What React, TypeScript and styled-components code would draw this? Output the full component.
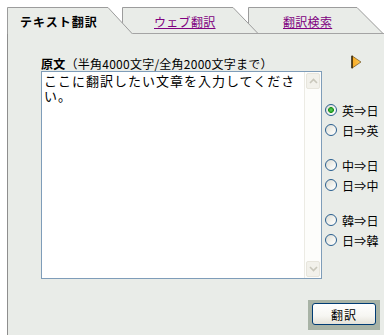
import React from "react";
import styled, { createGlobalStyle } from "styled-components";

const GlobalStyle = createGlobalStyle`
  html, body { margin: 0; padding: 0; background: #ffffff; }
  body { font-family: "Noto Sans CJK JP", "Noto Sans", sans-serif; }
`;

const FONT = `"Noto Sans CJK JP", "Noto Sans", sans-serif`;
const BG = "#E9ECE8";

const Page = styled.div`
  width: 384px;
  height: 335px;
  box-sizing: border-box;
  padding: 7px 0 0 7px;
  display: flex;
  flex-direction: column;
  overflow: hidden;
  font-family: ${FONT};
`;

const TabRow = styled.div`
  display: flex;
  height: 27px;
  flex: none;
`;

const TabBox = styled.div<{ $w: number; $z: number; $pl: number; $first?: boolean }>`
  position: relative;
  width: ${(p) => p.$w}px;
  height: 27px;
  margin-left: ${(p) => (p.$first ? 0 : -11)}px;
  z-index: ${(p) => p.$z};
  display: flex;
  align-items: center;
  padding-left: ${(p) => p.$pl}px;
  box-sizing: border-box;
  flex: none;
`;

const TabShape = styled.svg`
  position: absolute;
  left: 0;
  top: 0;
`;

const ActiveLabel = styled.span`
  position: relative;
  font-size: 12px;
  font-weight: bold;
  letter-spacing: 1px;
  color: #000;
  margin-top: 1px;
`;

const TabLink = styled.a`
  position: relative;
  font-size: 12px;
  letter-spacing: 0.3px;
  color: #800080;
  text-decoration: underline;
  margin-top: 1px;
  cursor: pointer;
`;

const Panel = styled.div`
  flex: 1;
  background: ${BG};
  border-left: 1px solid #8e8e8e;
  padding: 22px 4px 0 33px;
  box-sizing: border-box;
  display: flex;
  flex-direction: column;
`;

const Main = styled.div`
  display: flex;
`;

const LeftCol = styled.div`
  width: 281px;
  display: flex;
  flex-direction: column;
  flex: none;
`;

const Label = styled.div`
  font-size: 12px;
  line-height: 15px;
  height: 15px;
  letter-spacing: 0.25px;
  color: #000;
  white-space: nowrap;
  b { font-weight: bold; }
`;

const TextBox = styled.div`
  display: flex;
  height: 208px;
  border: 1px solid #7f9db9;
  background: #ffffff;
  box-sizing: border-box;
`;

const TextArea = styled.textarea`
  flex: 1;
  border: none;
  outline: none;
  resize: none;
  margin: 0;
  padding: 1px 0 0 2px;
  font-family: ${FONT};
  font-size: 13px;
  letter-spacing: 1px;
  line-height: 15px;
  color: #000;
  background: transparent;
  overflow: hidden;
`;

const ScrollBar = styled.div`
  width: 17px;
  border-left: 1px solid #ecebe4;
  padding: 1px;
  box-sizing: border-box;
  display: flex;
  flex-direction: column;
  justify-content: space-between;
  background: #fdfdfb;
`;

const ScrollBtn = styled.div`
  height: 16px;
  background: #f2f1eb;
  border: 1px solid #e7e5dc;
  border-radius: 2px;
  display: flex;
  align-items: center;
  justify-content: center;
  box-sizing: border-box;
`;

const RightCol = styled.div`
  padding-left: 3px;
  display: flex;
  flex-direction: column;
`;

const Arrow = styled.svg`
  margin: -1px 0 0 26px;
`;

const Groups = styled.div`
  margin-top: 31px;
  display: flex;
  flex-direction: column;
  gap: 15px;
`;

const Group = styled.div`
  display: flex;
  flex-direction: column;
`;

const RadioRow = styled.label`
  display: flex;
  align-items: center;
  height: 20px;
  gap: 5px;
  font-size: 12px;
  letter-spacing: 0.3px;
  color: #000;
  white-space: nowrap;
`;

const Radio = styled.input`
  appearance: none;
  -webkit-appearance: none;
  width: 12px;
  height: 12px;
  margin: 0;
  border-radius: 50%;
  border: 1px solid #2a5f8f;
  box-sizing: border-box;
  background: linear-gradient(135deg, #dcdcd4 0%, #f4f4f0 60%, #ffffff 100%);
  &:checked {
    background: radial-gradient(circle at 50% 50%, #5fd35f 0, #2aa52a 2px, #1f8f1f 2.6px, transparent 3.2px),
      linear-gradient(135deg, #dcdcd4 0%, #f4f4f0 60%, #ffffff 100%);
  }
`;

const Footer = styled.div`
  display: flex;
  justify-content: flex-end;
  margin-top: 21px;
`;

const ButtonFrame = styled.div`
  background: #a8b3a6;
  padding: 3px 4px 5px 4px;
`;

const Button = styled.button`
  width: 64px;
  height: 22px;
  margin: 0;
  padding: 0;
  border: 1px solid #003c74;
  border-radius: 3px;
  background: linear-gradient(#ffffff 0%, #f6f6f2 60%, #e4e2d8 100%);
  font-family: ${FONT};
  font-size: 12px;
  letter-spacing: 1px;
  color: #000;
  display: flex;
  align-items: center;
  justify-content: center;
`;

type TabProps = {
  w: number;
  d: number;
  z: number;
  pl: number;
  active?: boolean;
  first?: boolean;
  children: React.ReactNode;
};

function Tab({ w, d, z, pl, active, first, children }: TabProps) {
  return (
    <TabBox $w={w} $z={z} $pl={pl} $first={first}>
      <TabShape width={w} height={27} viewBox={`0 0 ${w} 27`}>
        <path d={`M0 27 V0.5 H${w - d} L${w} 27 Z`} fill={BG} />
        <path
          d={`M0.5 27 V0.5 H${w - d} L${w - 0.5} 27`}
          fill="none"
          stroke="#9c9c9c"
          strokeWidth={1}
        />
        {!active && <path d={`M0 26.5 H${w}`} stroke="#a4a4a4" strokeWidth={1} />}
      </TabShape>
      {children}
    </TabBox>
  );
}

const Chevron = ({ up }: { up?: boolean }) => (
  <svg width="9" height="6" viewBox="0 0 9 6">
    <path
      d={up ? "M1 5 L4.5 1.5 L8 5" : "M1 1 L4.5 4.5 L8 1"}
      fill="none"
      stroke="#c9c7bb"
      strokeWidth="1.6"
    />
  </svg>
);

const groups = [
  ["英⇒日", "日⇒英"],
  ["中⇒日", "日⇒中"],
  ["韓⇒日", "日⇒韓"],
];

export default function App() {
  return (
    <>
      <GlobalStyle />
      <Page>
        <TabRow>
          <Tab w={126} d={25} z={3} pl={13} active first>
            <ActiveLabel>テキスト翻訳</ActiveLabel>
          </Tab>
          <Tab w={137} d={26} z={2} pl={32}>
            <TabLink>ウェブ翻訳</TabLink>
          </Tab>
          <Tab w={136} d={27} z={1} pl={35}>
            <TabLink>翻訳検索</TabLink>
          </Tab>
        </TabRow>
        <Panel>
          <Main>
            <LeftCol>
              <Label>
                <b>原文</b>（半角4000文字/全角2000文字まで）
              </Label>
              <TextBox>
                <TextArea defaultValue="ここに翻訳したい文章を入力してください。" />
                <ScrollBar>
                  <ScrollBtn>
                    <Chevron up />
                  </ScrollBtn>
                  <ScrollBtn>
                    <Chevron />
                  </ScrollBtn>
                </ScrollBar>
              </TextBox>
            </LeftCol>
            <RightCol>
              <Arrow width="11" height="14" viewBox="0 0 11 14">
                <defs>
                  <linearGradient id="ag" x1="0" y1="0" x2="1" y2="0">
                    <stop offset="0" stopColor="#f7a81e" />
                    <stop offset="1" stopColor="#fcc85a" />
                  </linearGradient>
                </defs>
                <path d="M1 0.8 L10 7 L1 13.2 Z" fill="url(#ag)" stroke="#5a4010" strokeWidth="0.6" />
                <path d="M1 0.8 V13.2" stroke="#2a1e08" strokeWidth="1.4" />
              </Arrow>
              <Groups>
                {groups.map((g, gi) => (
                  <Group key={gi}>
                    {g.map((label, li) => (
                      <RadioRow key={label}>
                        <Radio
                          type="radio"
                          name="lang"
                          defaultChecked={gi === 0 && li === 0}
                        />
                        {label}
                      </RadioRow>
                    ))}
                  </Group>
                ))}
              </Groups>
            </RightCol>
          </Main>
          <Footer>
            <ButtonFrame>
              <Button type="button">翻訳</Button>
            </ButtonFrame>
          </Footer>
        </Panel>
      </Page>
    </>
  );
}
